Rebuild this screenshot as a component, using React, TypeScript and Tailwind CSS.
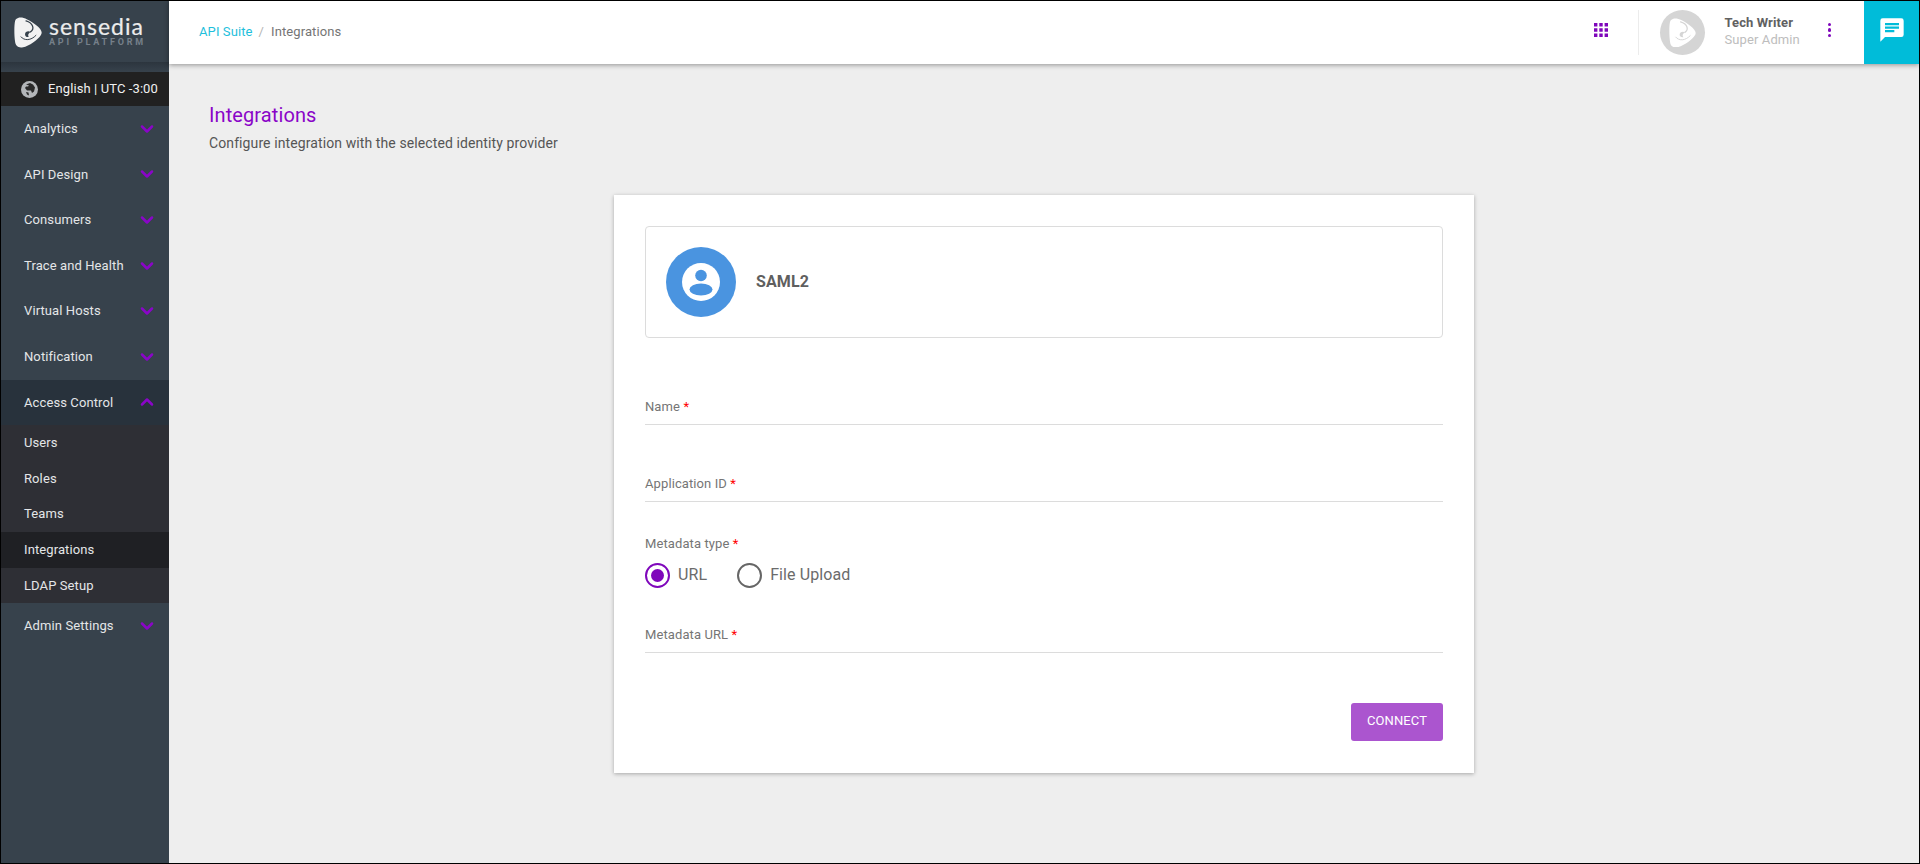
import { ChevronDown, ChevronUp } from "lucide-react";

const before = ["Analytics", "API Design", "Consumers", "Trace and Health", "Virtual Hosts", "Notification"];
const subItems = ["Users", "Roles", "Teams", "Integrations", "LDAP Setup"];

function LogoMark({ fill, cut, size }: { fill: string; cut: string; size: number }) {
  return (
    <svg width={size} height={size * 1.1} viewBox="0 0 28 31" fill="none">
      <path
        d="M4 1C8-.5 14 2 22 8c5 4 7 7 5 10-3 5-12 11-18 12.500C4 31.500 1.500 29 1 25 0 18 0 8 1 4c.5-2 1.500-2.500 3-3Z"
        fill={fill}
      />
      <path d="M12 4c7 2 9 8 4.500 11" stroke={cut} strokeWidth="1.300" strokeLinecap="round" />
      <path d="M7 20c3 4 10 4 15-1.500" stroke={cut} strokeWidth="1" strokeLinecap="round" />
      <path d="M16.500 15c-2.500-1.500-5.500 0-5.500 2.500 0 2 2 3 4 2.500-1-1-1.500-3 1.500-5Z" fill={cut} />
    </svg>
  );
}

function NavItem({ label, open }: { label: string; open?: boolean }) {
  return (
    <div className={`flex h-[45.6px] items-center justify-between pl-[23px] pr-[12px] text-[13px] text-[#e4e6e8] ${open ? "bg-[#28323c]" : ""}`}>
      <span>{label}</span>
      {open ? (
        <ChevronUp className="h-[20px] w-[20px] text-[#8a05c8]" strokeWidth={3} />
      ) : (
        <ChevronDown className="h-[20px] w-[20px] text-[#8a05c8]" strokeWidth={3} />
      )}
    </div>
  );
}

function Sidebar() {
  return (
    <aside className="flex w-[168px] shrink-0 flex-col bg-[#37424c]">
      <div className="flex h-[61px] items-center gap-[7px] pl-[13px] pt-[2px]">
        <LogoMark fill="#f2f2f2" cut="#37424c" size={28} />
        <div className="flex flex-col items-start">
          <span className="font-['Lato',sans-serif] text-[23px] font-normal leading-[17px] tracking-[1px] text-[#ececec] [-webkit-text-stroke:0.2px_#ececec]">sensedia</span>
          <span className="mt-[2px] text-[9px] font-bold leading-[10px] tracking-[2.8px] text-[#76808a]">API PLATFORM</span>
        </div>
      </div>
      <div className="h-[10px] bg-gradient-to-b from-[#2c353e] to-[#37424c]" />
      <div className="flex h-[34px] items-center gap-[10px] bg-[#212121] pl-[20px] text-[13px] text-[#f0f0f0]">
        <svg width="17" height="17" viewBox="0 0 17 17">
          <circle cx="8.500" cy="8.500" r="8.500" fill="#b3b6b9" />
          <path d="M5 3.500 9 2l3 1.500 2 3-1 4-2 1.500-1-2.500H6L4 7l1-1.500h2l1-1L5 3.500ZM5 11l2.500.5.5 3L6 13.500 5 11Z" fill="#2a2a2a" />
        </svg>
        <span>English | UTC -3:00</span>
      </div>
      {before.map((item) => (
        <NavItem key={item} label={item} />
      ))}
      <NavItem label="Access Control" open />
      <div className="bg-[#2e2f35]">
        {subItems.map((item) => (
          <div
            key={item}
            className={`flex h-[35.6px] items-center pl-[23px] text-[13px] text-[#e4e6e8] ${item === "Integrations" ? "bg-[#1f2024]" : ""}`}
          >
            {item}
          </div>
        ))}
      </div>
      <NavItem label="Admin Settings" />
    </aside>
  );
}

function Header() {
  return (
    <header className="relative z-10 flex h-[63px] shrink-0 items-center justify-between bg-white pl-[30px] shadow-[0_1px_5px_rgba(0,0,0,0.4)]">
      <div className="flex items-center pb-[1px] text-[13px]">
        <span className="text-[#1fc0dc]">API Suite</span>
        <span className="mx-[6px] text-[#b5b5b5]">/</span>
        <span className="ml-[1px] text-[#757575]">Integrations</span>
      </div>
      <div className="flex h-full items-center">
        <svg width="14" height="14" viewBox="0 0 14 14" fill="#7f07bb" className="mb-[5px] mr-[30px]">
          <path d="M0 0h3.400v3.400H0zM5.300 0h3.400v3.400H5.300zM10.600 0H14v3.400h-3.400zM0 5.300h3.400v3.400H0zM5.300 5.300h3.400v3.400H5.300zM10.600 5.300H14v3.400h-3.400zM0 10.600h3.400V14H0zM5.300 10.600h3.400V14H5.300zM10.600 10.600H14V14h-3.400z" />
        </svg>
        <div className="mr-[21px] h-[45px] w-px bg-[#ececec]" />
        <div className="mr-[20px] flex h-[45px] w-[45px] items-center justify-center rounded-full bg-[#d5d5d5]">
          <LogoMark fill="#ffffff" cut="#d5d5d5" size={27} />
        </div>
        <div className="flex w-[103px] flex-col pb-[3px] text-[13px] leading-[17px]">
          <span className="font-bold text-[#616161]">Tech Writer</span>
          <span className="text-[#bdbdbd]">Super Admin</span>
        </div>
        <div className="mb-[5px] mr-[33px] flex flex-col gap-[2px]">
          <span className="h-[3.5px] w-[3.5px] rounded-full bg-[#7f07bb]" />
          <span className="h-[3.5px] w-[3.5px] rounded-full bg-[#7f07bb]" />
          <span className="h-[3.5px] w-[3.5px] rounded-full bg-[#7f07bb]" />
        </div>
        <div className="flex h-full w-[55px] items-center justify-center bg-[#00bcd9] pb-[5px]">
          <svg width="28" height="28" viewBox="0 0 24 24" fill="#ffffff">
            <path d="M20 2H4a2 2 0 0 0-2 2v18l4-4h14a2 2 0 0 0 2-2V4a2 2 0 0 0-2-2ZM6 9h12v2H6V9Zm8 5H6v-2h8v2Zm4-6H6V6h12v2Z" />
          </svg>
        </div>
      </div>
    </header>
  );
}

function Label({ text }: { text: string }) {
  return (
    <span className="text-[13px] leading-[16px] text-[#757575]">
      {text} <span className="text-[#f00]">*</span>
    </span>
  );
}

function TextField({ label, className }: { label: string; className: string }) {
  return (
    <div className={`flex items-start border-b border-[#dcdcdc] ${className}`}>
      <Label text={label} />
    </div>
  );
}

function Radio({ label, checked }: { label: string; checked?: boolean }) {
  return (
    <div className="flex items-center gap-[8px]">
      <span className={`flex h-[25px] w-[25px] items-center justify-center rounded-full border-2 ${checked ? "border-[#7f07bb]" : "border-[#666666]"}`}>
        {checked && <span className="h-[13px] w-[13px] rounded-full bg-[#7f07bb]" />}
      </span>
      <span className="text-[16px] text-[#6b6b6b]">{label}</span>
    </div>
  );
}

export default function App() {
  return (
    <div className="flex h-[864px] w-[1920px] overflow-hidden border border-black bg-[#eeeeee] font-['Roboto',sans-serif] tracking-[0.1px]">
      <Sidebar />
      <div className="flex min-w-0 flex-1 flex-col">
        <Header />
        <main className="flex-1 px-[40px] pt-[39px]">
          <h1 className="text-[20px] leading-[24px] text-[#8a05c8]">Integrations</h1>
          <p className="mt-[6.5px] text-[14px] leading-[18px] text-[#555555]">Configure integration with the selected identity provider</p>
          <div className="ml-[405px] mt-[43px] h-[578px] w-[860px] bg-white px-[31px] pt-[31px] shadow-[0_1px_4px_rgba(0,0,0,0.3)]">
            <div className="flex h-[112px] items-center gap-[20px] rounded-[4px] border border-[#dcdcdc] pl-[20px]">
              <div className="flex h-[70px] w-[70px] items-center justify-center rounded-full bg-[#4a94e0]">
                <svg width="38" height="38" viewBox="0 0 38 38">
                  <circle cx="19" cy="19" r="19" fill="#ffffff" />
                  <circle cx="19" cy="12.500" r="5.800" fill="#4a94e0" />
                  <ellipse cx="19" cy="26.500" rx="11.500" ry="6" fill="#4a94e0" />
                </svg>
              </div>
              <span className="text-[16px] font-bold text-[#5f5f5f]">SAML2</span>
            </div>
            <TextField label="Name" className="mt-[60px] h-[27px] pt-[1px]" />
            <TextField label="Application ID" className="mt-[50px] h-[27px] pt-[1px]" />
            <div className="mt-[34px] flex flex-col">
              <Label text="Metadata type" />
              <div className="mt-[11px] flex gap-[30px]">
                <Radio label="URL" checked />
                <Radio label="File Upload" />
              </div>
            </div>
            <TextField label="Metadata URL" className="mt-[39px] h-[26px]" />
            <div className="mt-[50px] flex justify-end">
              <button className="flex h-[38px] w-[92px] items-center justify-center rounded-[3px] bg-[#ab55cf] pb-[1px] text-[13px] font-normal text-white">CONNECT</button>
            </div>
          </div>
        </main>
      </div>
    </div>
  );
}
